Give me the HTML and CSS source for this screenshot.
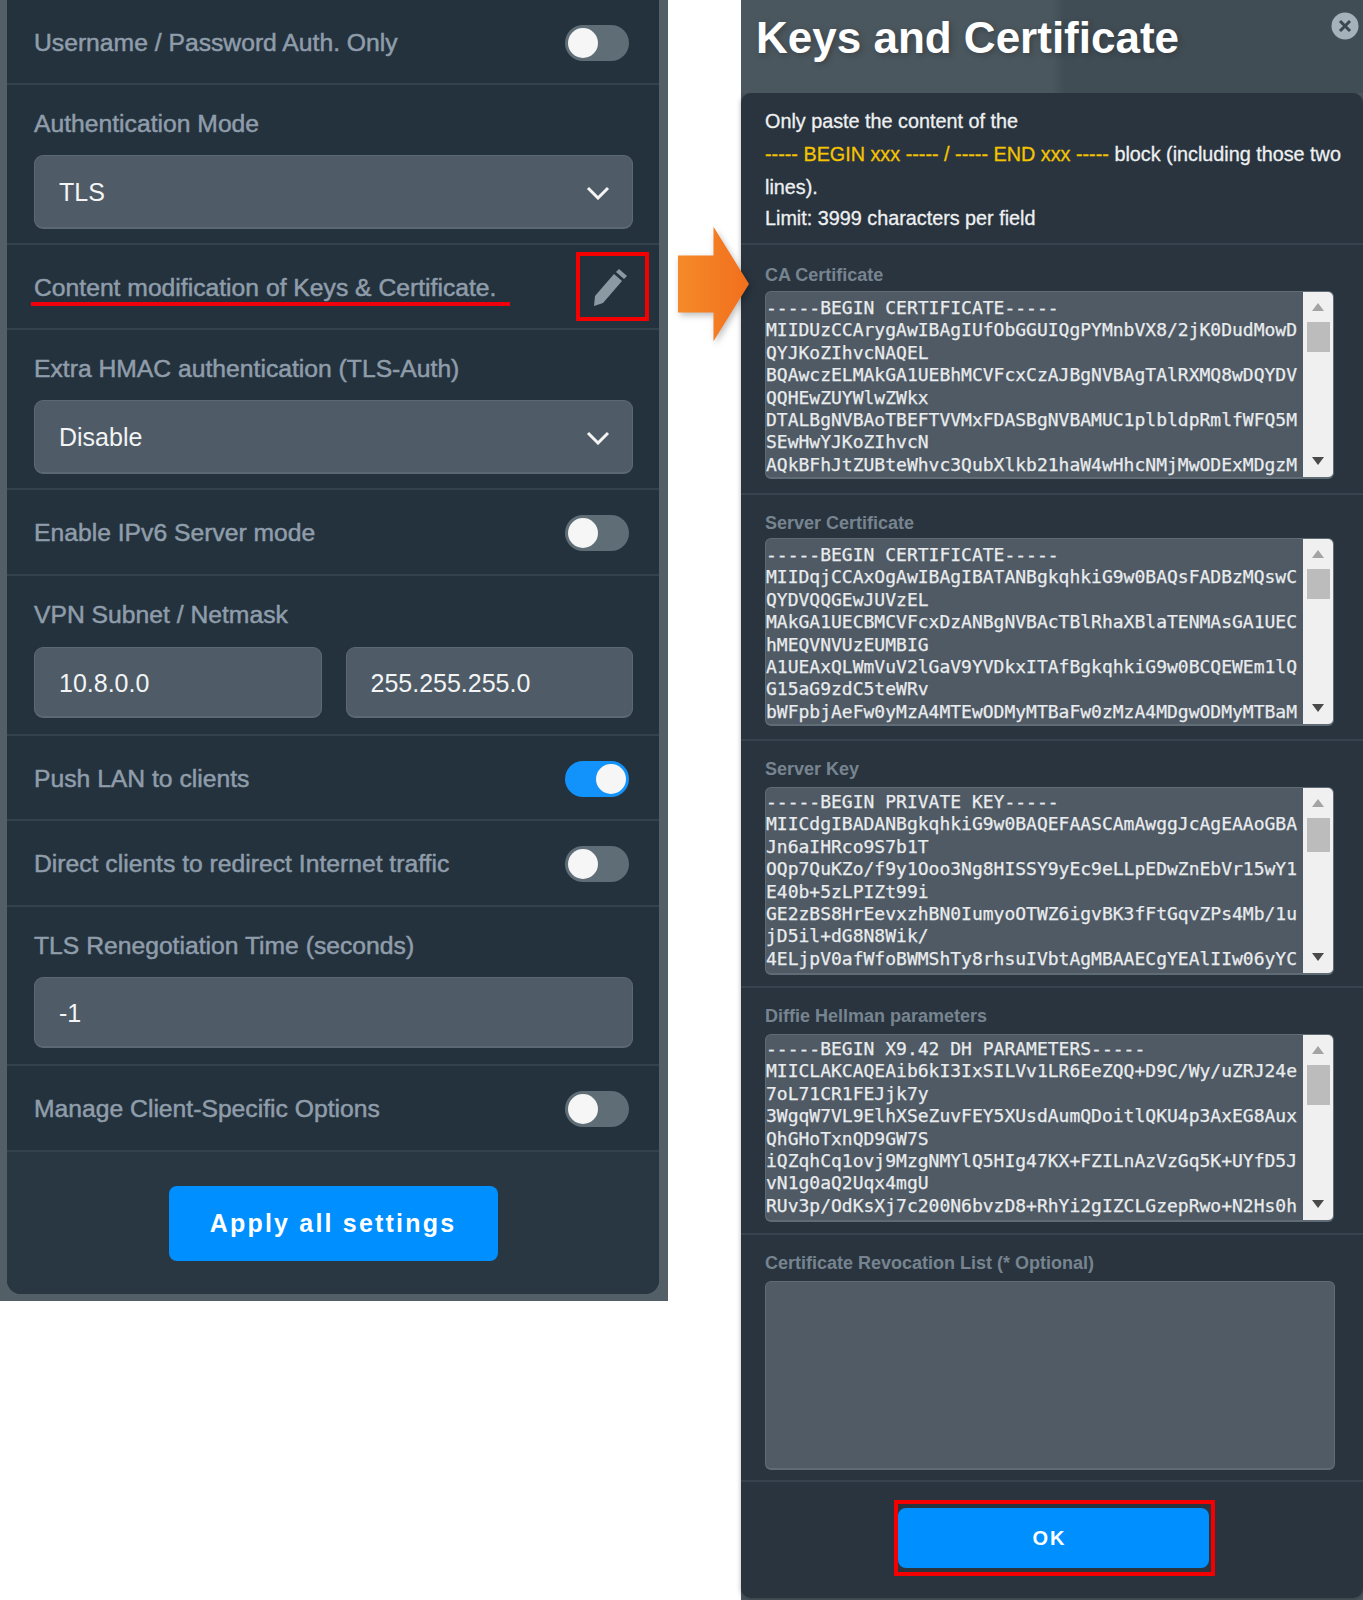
FILE: index.html
```html
<!DOCTYPE html>
<html lang="en">
<head>
<meta charset="utf-8">
<title>VPN Server settings</title>
<link rel="stylesheet" href="styles.css">
</head>
<body>
<main class="page">
  <section class="settings">
    <div class="card">
      <div class="row row-h85"><span class="label">Username / Password Auth. Only</span><span class="toggle"></span></div>
      <div class="field field-select">
        <div class="label">Authentication Mode</div>
        <div class="select">TLS<svg class="chevron" viewBox="0 0 24 14"><path d="M2 2l10 10L22 2"/></svg></div>
      </div>
      <div class="row row-h85 row-keys">
        <span class="label">Content modification of Keys &amp; Certificate.</span>
        <svg class="pencil" viewBox="0 0 36 38"><path d="M1 37l1-10L21 5l8 7L10 34z"/><path d="M23 3l3-3 8 7-3 3z"/></svg>
        <span class="mark-line"></span>
        <span class="mark-box"></span>
      </div>
      <div class="field field-select">
        <div class="label">Extra HMAC authentication (TLS-Auth)</div>
        <div class="select">Disable<svg class="chevron" viewBox="0 0 24 14"><path d="M2 2l10 10L22 2"/></svg></div>
      </div>
      <div class="row row-h86"><span class="label">Enable IPv6 Server mode</span><span class="toggle"></span></div>
      <div class="field field-pair">
        <div class="label">VPN Subnet / Netmask</div>
        <div class="pair"><div class="input">10.8.0.0</div><div class="input">255.255.255.0</div></div>
      </div>
      <div class="row row-h85"><span class="label">Push LAN to clients</span><span class="toggle toggle-on"></span></div>
      <div class="row row-h86"><span class="label">Direct clients to redirect Internet traffic</span><span class="toggle"></span></div>
      <div class="field field-input">
        <div class="label">TLS Renegotiation Time (seconds)</div>
        <div class="input">-1</div>
      </div>
      <div class="row row-h86"><span class="label">Manage Client-Specific Options</span><span class="toggle"></span></div>
      <div class="card-foot"><button class="apply">Apply all settings</button></div>
    </div>
  </section>

  <svg class="arrow" viewBox="0 0 72 116">
    <defs>
      <linearGradient id="orange" x1="0" y1="0" x2="1" y2="0">
        <stop offset="0" stop-color="#f58a2a"/>
        <stop offset="1" stop-color="#f26f1c"/>
      </linearGradient>
    </defs>
    <path d="M0 29h36V0l36 58-36 58V87H0z" fill="url(#orange)"/>
  </svg>

  <section class="modal">
    <header class="modal-head">
      <h1 class="modal-title">Keys and Certificate</h1>
      <svg class="close" viewBox="0 0 28 28"><circle cx="14" cy="14" r="13.5"/><path d="M9 9l10 10M19 9L9 19"/></svg>
    </header>
    <div class="modal-card">
      <div class="intro">
        <p>Only paste the content of the</p>
        <p><span class="hl">----- BEGIN xxx ----- / ----- END xxx -----</span> <span>block (including those two lines).</span></p>
        <p class="limit">Limit: 3999 characters per field</p>
      </div>
      <div class="cert cert-first">
        <div class="cert-label">CA Certificate</div>
        <div class="area">
<pre class="code">-----BEGIN CERTIFICATE-----
MIIDUzCCArygAwIBAgIUfObGGUIQgPYMnbVX8/2jK0DudMowD
QYJKoZIhvcNAQEL
BQAwczELMAkGA1UEBhMCVFcxCzAJBgNVBAgTAlRXMQ8wDQYDV
QQHEwZUYWlwZWkx
DTALBgNVBAoTBEFTVVMxFDASBgNVBAMUC1plbldpRmlfWFQ5M
SEwHwYJKoZIhvcN
AQkBFhJtZUBteWhvc3QubXlkb21haW4wHhcNMjMwODExMDgzM</pre>
          <div class="scroll"><i class="up"></i><b class="thumb"></b><i class="down"></i></div>
        </div>
      </div>
      <div class="cert cert-second">
        <div class="cert-label">Server Certificate</div>
        <div class="area">
<pre class="code">-----BEGIN CERTIFICATE-----
MIIDqjCCAxOgAwIBAgIBATANBgkqhkiG9w0BAQsFADBzMQswC
QYDVQQGEwJUVzEL
MAkGA1UECBMCVFcxDzANBgNVBAcTBlRhaXBlaTENMAsGA1UEC
hMEQVNVUzEUMBIG
A1UEAxQLWmVuV2lGaV9YVDkxITAfBgkqhkiG9w0BCQEWEm1lQ
G15aG9zdC5teWRv
bWFpbjAeFw0yMzA4MTEwODMyMTBaFw0zMzA4MDgwODMyMTBaM</pre>
          <div class="scroll"><i class="up"></i><b class="thumb"></b><i class="down"></i></div>
        </div>
      </div>
      <div class="cert">
        <div class="cert-label">Server Key</div>
        <div class="area">
<pre class="code code-high">-----BEGIN PRIVATE KEY-----
MIICdgIBADANBgkqhkiG9w0BAQEFAASCAmAwggJcAgEAAoGBA
Jn6aIHRco9S7b1T
OQp7QuKZo/f9y1Ooo3Ng8HISSY9yEc9eLLpEDwZnEbVr15wY1
E40b+5zLPIZt99i
GE2zBS8HrEevxzhBN0IumyoOTWZ6igvBK3fFtGqvZPs4Mb/1u
jD5il+dG8N8Wik/
4ELjpV0afWfoBWMShTy8rhsuIVbtAgMBAAECgYEAlIIw06yYC</pre>
          <div class="scroll"><i class="up"></i><b class="thumb thumb-key"></b><i class="down"></i></div>
        </div>
      </div>
      <div class="cert">
        <div class="cert-label">Diffie Hellman parameters</div>
        <div class="area">
<pre class="code code-high">-----BEGIN X9.42 DH PARAMETERS-----
MIICLAKCAQEAib6kI3IxSILVv1LR6EeZQQ+D9C/Wy/uZRJ24e
7oL71CR1FEJjk7y
3WgqW7VL9ElhXSeZuvFEY5XUsdAumQDoitlQKU4p3AxEG8Aux
QhGHoTxnQD9GW7S
iQZqhCq1ovj9MzgNMYlQ5HIg47KX+FZILnAzVzGq5K+UYfD5J
vN1g0aQ2Uqx4mgU
RUv3p/OdKsXj7c200N6bvzD8+RhYi2gIZCLGzepRwo+N2Hs0h</pre>
          <div class="scroll"><i class="up"></i><b class="thumb thumb-dh"></b><i class="down"></i></div>
        </div>
      </div>
      <div class="cert">
        <div class="cert-label">Certificate Revocation List (* Optional)</div>
        <div class="area area-empty"></div>
      </div>
      <div class="modal-foot">
        <div class="ok-wrap"><button class="ok">OK</button><span class="ok-mark"></span></div>
      </div>
    </div>
  </section>
</main>
</body>
</html>
```

FILE: styles.css
```css
* { box-sizing: border-box; }
html, body { margin: 0; padding: 0; background: #fff; }
body { font-family: "Liberation Sans", Arial, sans-serif; }

.page { position: relative; display: flex; align-items: flex-start; width: 1363px; height: 1600px; overflow: hidden; }

/* left settings panel */
.settings { flex: none; width: 668px; height: 1301px; padding: 0 9px 7px 7px; background: #525f66; margin-right: 73px; }
.card { height: 100%; background: #24323d; border-radius: 0 0 14px 14px; display: flex; flex-direction: column; }

.label { font-size: 24.7px; line-height: 30px; color: #8f9dab; -webkit-text-stroke: 0.5px #8f9dab; }

.row { position: relative; display: flex; align-items: center; justify-content: space-between; padding: 2px 30px 0 27px; border-bottom: 2px solid #34424e; flex: none; }
.row-h85 { height: 85px; }
.row-h86 { height: 86px; }

.toggle { position: relative; flex: none; width: 64px; height: 36px; border-radius: 18px; background: #5f6d77; }
.toggle::before { content: ""; position: absolute; left: 3px; top: 3px; width: 30px; height: 30px; border-radius: 50%; background: #f6f6f6; }
.toggle-on { background: #1293fb; }
.toggle-on::before { left: 31px; }

.field { flex: none; padding: 24px 26px 0 27px; border-bottom: 2px solid #34424e; }
.field-select { height: 160px; }
.field-pair { height: 160px; }
.field-input { height: 159px; }
.field .label { margin-bottom: 16px; }
.field-pair .label { margin-bottom: 17px; }

.select { position: relative; display: flex; align-items: center; height: 74px; padding: 2px 24px 0; border: 1px solid #5c6973; border-bottom-width: 2px; border-radius: 9px; background: #4f5c67; color: #f2f4f5; font-size: 25px; }
.chevron { position: absolute; right: 22px; top: 30px; width: 24px; height: 14px; fill: none; stroke: #f4f4f4; stroke-width: 3; }

.pair { display: flex; gap: 24px; }
.pair .input { flex: 1; }
.input { display: flex; align-items: center; height: 71px; padding: 2px 24px 0; border: 1px solid #5c6973; border-bottom-width: 2px; border-radius: 9px; background: #4f5c67; color: #f2f4f5; font-size: 25px; }

.pencil { position: absolute; right: 30px; top: 24px; width: 36px; height: 38px; fill: #8b99a3; }
.mark-line { position: absolute; left: 24px; top: 57px; width: 479px; height: 4px; background: #f0000c; }
.mark-box { position: absolute; left: 569px; top: 7px; width: 73px; height: 69px; border: 4px solid #f40000; }

.card-foot { flex: 1; display: flex; justify-content: center; padding-top: 34px; background: #293743; border-radius: 0 0 14px 14px; }
.apply { width: 329px; height: 75px; border: 0; border-radius: 8px; background: #008fff; color: #fff; font: bold 25px "Liberation Sans", Arial, sans-serif; letter-spacing: 2.2px; }

/* arrow */
.arrow { position: absolute; left: 678px; top: 226px; width: 71px; height: 116px; filter: drop-shadow(2px 3px 3px rgba(0,0,0,.25)); }

/* right modal */
.modal { flex: none; width: 622px; height: 1600px; background: #4a565e; }
.modal-head { position: relative; height: 93px; padding: 8px 0 0 15px; background: linear-gradient(90deg, #4b575e 0, #4b575e 50%, #414d55 52%, #414d55 100%); }
.modal-title { margin: 0; font-size: 44px; line-height: 60px; font-weight: bold; color: #fff; text-shadow: 2px 2px 6px rgba(0,0,0,.25); }
.close { position: absolute; right: 4px; top: 12px; width: 28px; height: 28px; }
.close circle { fill: #a5b1bb; }
.close path { fill: none; stroke: #3a4650; stroke-width: 3; }

.modal-card { height: 1505px; background: #29343f; border-radius: 10px; box-shadow: 0 1px 5px rgba(0,0,0,.3); display: flex; flex-direction: column; }

.intro { flex: none; height: 152px; padding: 12px 15px 0 24px; border-bottom: 2px solid #36434f; color: #eef0f1; font-size: 19.8px; line-height: 33px; -webkit-text-stroke: 0.3px #eef0f1; }
.intro p { margin: 0; }
.intro .limit { margin-top: -2px; }
.hl { color: #f5c400; -webkit-text-stroke: 0.3px #f5c400; }

.cert { flex: none; height: 247px; padding: 16px 29px 0 24px; border-bottom: 2px solid #36434f; }
.cert-label { height: 24px; margin-bottom: 6px; font-size: 18px; line-height: 24px; font-weight: bold; color: #77848f; }
.cert-first { height: 250px; padding-top: 18px; }
.cert-first .cert-label { margin-bottom: 4px; }
.cert-second { height: 246px; }
.cert-second .cert-label { margin-bottom: 3px; }

.area { display: flex; height: 188px; border: 1px solid #5f6b75; border-bottom-width: 2px; border-radius: 6px; background: #4f5a65; overflow: hidden; }
.area-empty { height: 189px; width: 570px; background: #515b65; }
.code { flex: 1; margin: 0; padding: 5px 0 0; font: 18px/22.4px "DejaVu Sans Mono", monospace; color: #e9ecee; -webkit-text-stroke: 0.25px #e9ecee; overflow: hidden; white-space: pre; }
.code-high { padding-top: 3px; }

.scroll { flex: none; width: 30px; display: flex; flex-direction: column; align-items: center; padding-top: 11px; background: #f0f0f0; }
.up, .down { width: 0; height: 0; border-left: 6.5px solid transparent; border-right: 6.5px solid transparent; }
.up { border-bottom: 8px solid #a3a3a3; }
.down { margin-top: auto; margin-bottom: 12px; border-top: 8px solid #4a4a4a; }
.thumb { width: 23px; height: 30px; margin-top: 11px; background: #bcbcbc; }
.thumb-key { height: 34px; }
.thumb-dh { height: 40px; }

.modal-foot { flex: 1; padding: 26px 0 0 157px; }
.ok-wrap { position: relative; width: 311px; }
.ok { display: block; width: 311px; height: 60px; padding: 0 8px 0 0; border: 0; border-radius: 8px; background: #008fff; color: #fff; font: bold 20px "Liberation Sans", Arial, sans-serif; letter-spacing: 2px; }
.ok-mark { position: absolute; left: -4px; top: -8px; width: 321px; height: 76px; border: 4px solid #f40000; }
```
